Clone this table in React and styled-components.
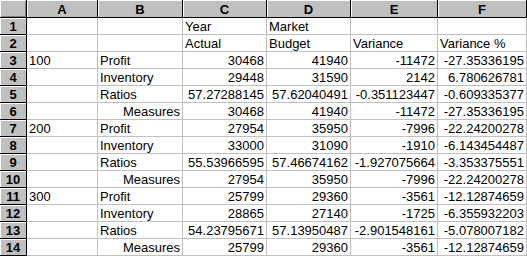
import React from "react";
import styled, { createGlobalStyle } from "styled-components";

const Global = createGlobalStyle`
  html, body { margin: 0; padding: 0; background: #ffffff; }
  body { font-family: "Liberation Sans", Arial, sans-serif; }
`;

const COLS = [27, 71, 85, 84, 84, 87, 89];

const Sheet = styled.div`
  display: grid;
  grid-template-columns: ${COLS.map((c) => c + "px").join(" ")};
  grid-template-rows: 18px repeat(14, 17px);
  width: 527px;
  font-size: 13px;
  color: #000;
  background: #fff;
`;

const Corner = styled.div`
  background: #c0c0c0;
  box-sizing: border-box;
  border-right: 1px solid #000;
  border-bottom: 1px solid #000;
  box-shadow: inset 1px 1px 0 #fff, inset -1px -1px 0 #808080;
`;

const ColHead = styled.div`
  background: #c0c0c0;
  box-sizing: border-box;
  border-right: 1px solid #000;
  border-bottom: 1px solid #000;
  box-shadow: inset 1px 1px 0 #fff;
  font-weight: bold;
  display: flex;
  align-items: center;
  justify-content: center;
  line-height: 1;
  padding-top: 1px;
`;

const RowHead = styled.div`
  background: #c0c0c0;
  box-sizing: border-box;
  border-right: 1px solid #000;
  border-bottom: 1px solid #000;
  box-shadow: inset 1px 1px 0 #fff;
  font-weight: bold;
  display: flex;
  align-items: center;
  justify-content: center;
  line-height: 1;
`;

const Cell = styled.div`
  box-sizing: border-box;
  border-right: 1px solid #c0c0c0;
  border-bottom: 1px solid #c0c0c0;
  display: flex;
  align-items: center;
  justify-content: ${(p) => (p.$right ? "flex-end" : "flex-start")};
  padding: 0 2px 0 2px;
  white-space: nowrap;
  overflow: hidden;
  line-height: 1;
`;

const letters = ["A", "B", "C", "D", "E", "F"];

const rows = [
  ["", "", "Year", "Market", "", ""],
  ["", "", "Actual", "Budget", "Variance", "Variance %"],
  ["100", "Profit", 30468, 41940, -11472, "-27.35336195"],
  ["", "Inventory", 29448, 31590, 2142, "6.780626781"],
  ["", "Ratios", "57.27288145", "57.62040491", "-0.351123447", "-0.609335377"],
  ["", "Measures", 30468, 41940, -11472, "-27.35336195"],
  ["200", "Profit", 27954, 35950, -7996, "-22.24200278"],
  ["", "Inventory", 33000, 31090, -1910, "-6.143454487"],
  ["", "Ratios", "55.53966595", "57.46674162", "-1.927075664", "-3.353375551"],
  ["", "Measures", 27954, 35950, -7996, "-22.24200278"],
  ["300", "Profit", 25799, 29360, -3561, "-12.12874659"],
  ["", "Inventory", 28865, 27140, -1725, "-6.355932203"],
  ["", "Ratios", "54.23795671", "57.13950487", "-2.901548161", "-5.078007182"],
  ["", "Measures", 25799, 29360, -3561, "-12.12874659"],
];

export default function App() {
  return (
    <>
      <Global />
      <Sheet>
        <Corner />
        {letters.map((l) => (
          <ColHead key={l}>{l}</ColHead>
        ))}
        {rows.map((r, i) => (
          <React.Fragment key={i}>
            <RowHead>{i + 1}</RowHead>
            {r.map((v, j) => {
              const right =
                (j >= 2 && i >= 2) || (j === 1 && v === "Measures");
              return (
                <Cell key={j} $right={right}>
                  {v}
                </Cell>
              );
            })}
          </React.Fragment>
        ))}
      </Sheet>
    </>
  );
}
